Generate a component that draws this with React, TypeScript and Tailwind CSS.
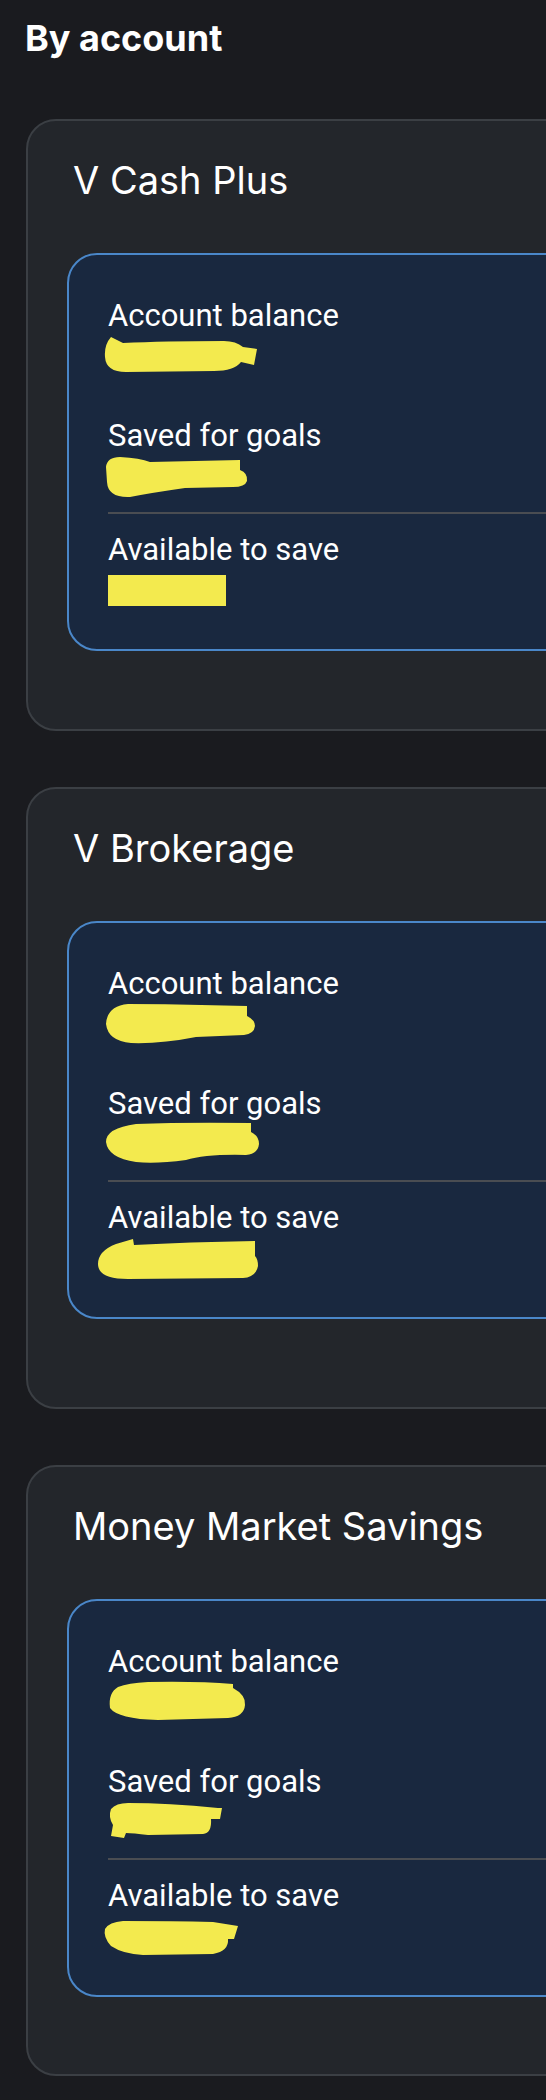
import React from 'react';

type Mark = { w: number; h: number; d: string; pos: string };

type Account = {
  name: string;
  extraBottom: string;
  marks: [Mark, Mark, Mark];
};

const accounts: Account[] = [
  {
    name: 'V Cash Plus',
    extraBottom: 'pb-[78px]',
    marks: [
      { w: 153, h: 35, pos: 'mt-[3px] ml-[-4px]', d: 'M7 0 L19 6 Q60 4 120 4 Q132 4 139 10 L153 12 L150 28 L137 25 Q130 34 110 34 L22 35 Q2 35 1 20 Q0 8 7 0 Z' },
      { w: 143, h: 41, pos: 'mt-[3px] ml-[-3px]', d: 'M15 0 Q35 1 45 5 L135 3 L135 13 Q143 16 142 24 Q140 30 128 30 L80 31 Q45 36 25 40 Q3 41 2 25 L1 10 Q2 0 15 0 Z' },
      { w: 118, h: 31, pos: 'mt-[7px] ml-0', d: 'M0 0 H118 V31 H0 Z' },
    ],
  },
  {
    name: 'V Brokerage',
    extraBottom: 'pb-[88px]',
    marks: [
      { w: 149, h: 40, pos: 'mt-[2px] ml-[-2px]', d: 'M22 0 Q60 0 95 1 L141 2 L141 12 Q149 16 149 22 Q148 30 138 31 L90 33 Q55 40 25 39 Q2 37 0 20 Q1 2 22 0 Z' },
      { w: 153, h: 41, pos: 'mt-0 ml-[-2px]', d: 'M30 2 Q80 0 145 1 L145 10 Q153 14 153 22 Q152 32 140 33 Q100 32 80 38 Q50 42 30 40 Q2 36 0 20 Q0 6 30 2 Z' },
      { w: 160, h: 40, pos: 'mt-[3px] ml-[-10px]', d: 'M18 5 L35 0 L36 6 Q90 3 157 2 L157 17 Q160 20 160 27 Q158 38 145 39 L30 40 Q0 40 0 25 Q0 12 18 5 Z' },
    ],
  },
  {
    name: 'Money Market Savings',
    extraBottom: 'pb-[77px]',
    marks: [
      { w: 138, h: 39, pos: 'mt-[1px] ml-0', d: 'M40 1 Q90 0 125 3 L125 7 Q138 14 137 24 Q136 36 120 37 L50 39 Q10 38 2 27 Q0 12 10 6 Q20 2 40 1 Z' },
      { w: 119, h: 35, pos: 'mt-[3px] ml-0', d: 'M20 0 Q60 0 110 5 L114 5 L112 16 L103 16 Q104 30 95 31 L40 32 Q25 30 18 30 L16 35 L3 33 L5 22 Q0 14 3 6 Q8 0 20 0 Z' },
      { w: 136, h: 34, pos: 'mt-[7px] ml-[-5px]', d: 'M20 0 Q70 0 110 1 L135 5 L131 18 L125 18 Q126 30 110 33 L40 34 Q20 33 8 25 Q0 16 2 8 Q6 1 20 0 Z' },
    ],
  },
];

// hidden amount, shown only as the yellow marker scribble
const Redacted: React.FC<{ mark: Mark }> = ({ mark }) => (
  <div className="flex h-[40px] items-start">
    <svg width={mark.w} height={mark.h} viewBox={`0 0 ${mark.w} ${mark.h}`} className={`block shrink-0 overflow-visible ${mark.pos}`}>
      <path d={mark.d} fill="#f3ea4e" />
    </svg>
  </div>
);

const Row: React.FC<{ label: string; mark: Mark }> = ({ label, mark }) => (
  <div>
    <div className="font-['Roboto',sans-serif] text-[31px] leading-[36px] text-white">{label}</div>
    <Redacted mark={mark} />
  </div>
);

const AccountCard: React.FC<{ account: Account }> = ({ account }) => (
  <div className={`w-[620px] shrink-0 rounded-[30px] border-2 border-[#3b3f44] bg-[#23262b] pl-[39px] pt-[37px] ${account.extraBottom}`}>
    <h3 className="ml-[6px] text-[38px] leading-[44px] text-white">{account.name}</h3>
    <div className="mt-[51px] rounded-[30px] border-2 border-[#4a87c9] bg-[#19283f] pl-[39px] pt-[43px] pb-[41px]">
      <div className="flex flex-col gap-[44px]">
        <Row label="Account balance" mark={account.marks[0]} />
        <Row label="Saved for goals" mark={account.marks[1]} />
      </div>
      <div className="my-[18px] h-[2px] bg-[#4a4d52]" />
      <Row label="Available to save" mark={account.marks[2]} />
    </div>
  </div>
);

export default function App() {
  return (
    <div className="min-h-[2100px] w-[546px] overflow-hidden bg-[#1a1b1f] font-['Inter','Noto_Sans',sans-serif] text-white">
      <h2 className="pl-[25px] pt-[20px] text-[36px] font-bold leading-[36px]">By account</h2>
      <div className="mt-[63px] flex flex-col gap-[56px] pl-[26px]">
        {accounts.map((a) => (
          <AccountCard key={a.name} account={a} />
        ))}
      </div>
    </div>
  );
}
